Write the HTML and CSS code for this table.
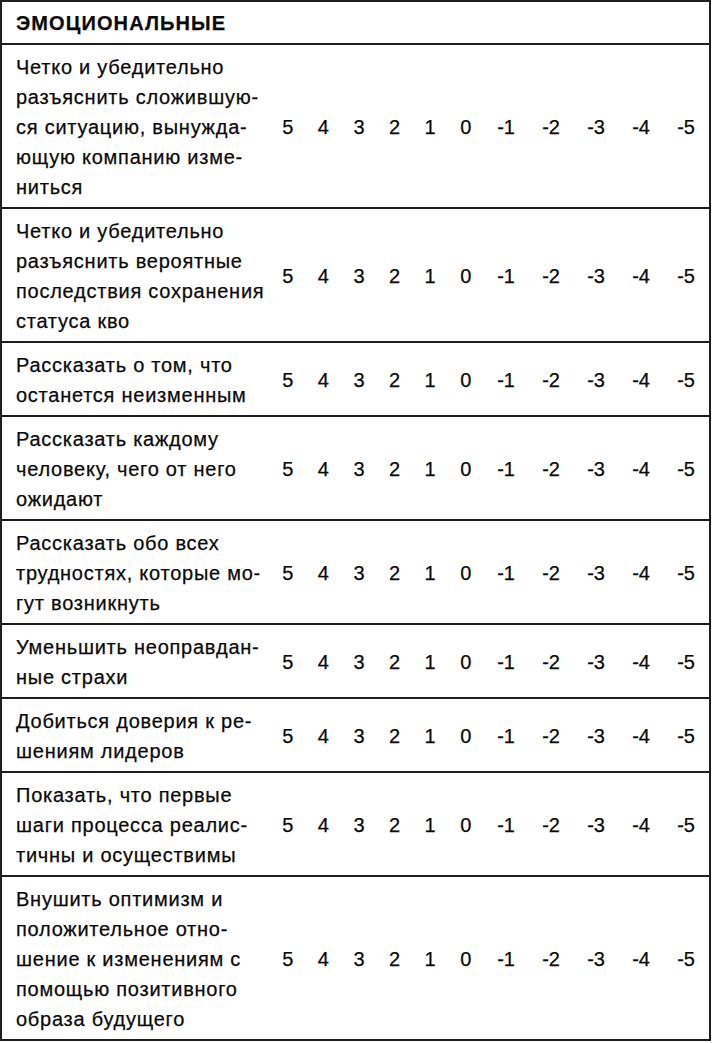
FILE: index.html
```html
<!DOCTYPE html>
<html lang="ru">
<head>
<meta charset="utf-8">
<title>Эмоциональные</title>
<link rel="stylesheet" href="styles.css">
</head>
<body>
<div class="table">
  <div class="head">ЭМОЦИОНАЛЬНЫЕ</div>

  <div class="row">
    <div class="label">Четко и убедительно<br>разъяснить сложившую-<br>ся ситуацию, вынужда-<br>ющую компанию изме-<br>ниться</div>
    <div class="scale"><span>5</span><span>4</span><span>3</span><span>2</span><span>1</span><span>0</span><span>-1</span><span>-2</span><span>-3</span><span>-4</span><span>-5</span></div>
  </div>

  <div class="row">
    <div class="label">Четко и убедительно<br>разъяснить вероятные<br>последствия сохранения<br>статуса кво</div>
    <div class="scale"><span>5</span><span>4</span><span>3</span><span>2</span><span>1</span><span>0</span><span>-1</span><span>-2</span><span>-3</span><span>-4</span><span>-5</span></div>
  </div>

  <div class="row">
    <div class="label">Рассказать о том, что<br>останется неизменным</div>
    <div class="scale"><span>5</span><span>4</span><span>3</span><span>2</span><span>1</span><span>0</span><span>-1</span><span>-2</span><span>-3</span><span>-4</span><span>-5</span></div>
  </div>

  <div class="row">
    <div class="label">Рассказать каждому<br>человеку, чего от него<br>ожидают</div>
    <div class="scale"><span>5</span><span>4</span><span>3</span><span>2</span><span>1</span><span>0</span><span>-1</span><span>-2</span><span>-3</span><span>-4</span><span>-5</span></div>
  </div>

  <div class="row">
    <div class="label">Рассказать обо всех<br>трудностях, которые мо-<br>гут возникнуть</div>
    <div class="scale"><span>5</span><span>4</span><span>3</span><span>2</span><span>1</span><span>0</span><span>-1</span><span>-2</span><span>-3</span><span>-4</span><span>-5</span></div>
  </div>

  <div class="row">
    <div class="label">Уменьшить неоправдан-<br>ные страхи</div>
    <div class="scale"><span>5</span><span>4</span><span>3</span><span>2</span><span>1</span><span>0</span><span>-1</span><span>-2</span><span>-3</span><span>-4</span><span>-5</span></div>
  </div>

  <div class="row">
    <div class="label">Добиться доверия к ре-<br>шениям лидеров</div>
    <div class="scale"><span>5</span><span>4</span><span>3</span><span>2</span><span>1</span><span>0</span><span>-1</span><span>-2</span><span>-3</span><span>-4</span><span>-5</span></div>
  </div>

  <div class="row">
    <div class="label">Показать, что первые<br>шаги процесса реалис-<br>тичны и осуществимы</div>
    <div class="scale"><span>5</span><span>4</span><span>3</span><span>2</span><span>1</span><span>0</span><span>-1</span><span>-2</span><span>-3</span><span>-4</span><span>-5</span></div>
  </div>

  <div class="row">
    <div class="label">Внушить оптимизм и<br>положительное отно-<br>шение к изменениям с<br>помощью позитивного<br>образа будущего</div>
    <div class="scale"><span>5</span><span>4</span><span>3</span><span>2</span><span>1</span><span>0</span><span>-1</span><span>-2</span><span>-3</span><span>-4</span><span>-5</span></div>
  </div>
</div>
</body>
</html>
```

FILE: styles.css
```css
html, body {
  margin: 0;
  padding: 0;
  background: #ffffff;
}

body {
  font-family: "Liberation Sans", Arial, sans-serif;
  color: #0a0a0a;
  -webkit-text-stroke: 0.25px #0a0a0a;
}

.table {
  box-sizing: border-box;
  width: 711px;
  border: 2px solid #1e1e1e;
}

.head {
  height: 41px;
  box-sizing: border-box;
  padding: 9px 14px 0;
  font-weight: bold;
  font-size: 20px;
  letter-spacing: 1.1px;
  line-height: 24px;
}

.row {
  display: grid;
  grid-template-columns: 254px 1fr;
  align-items: center;
  border-top: 2px solid #1e1e1e;
  padding: 7px 0 5px 14px;
}

.label {
  font-size: 20px;
  letter-spacing: 0.75px;
  line-height: 30px;
  white-space: nowrap;
}

.scale {
  display: grid;
  grid-template-columns: repeat(6, 35.6px) repeat(5, 45px);
  font-size: 20px;
  line-height: 24px;
  text-align: center;
}
```
